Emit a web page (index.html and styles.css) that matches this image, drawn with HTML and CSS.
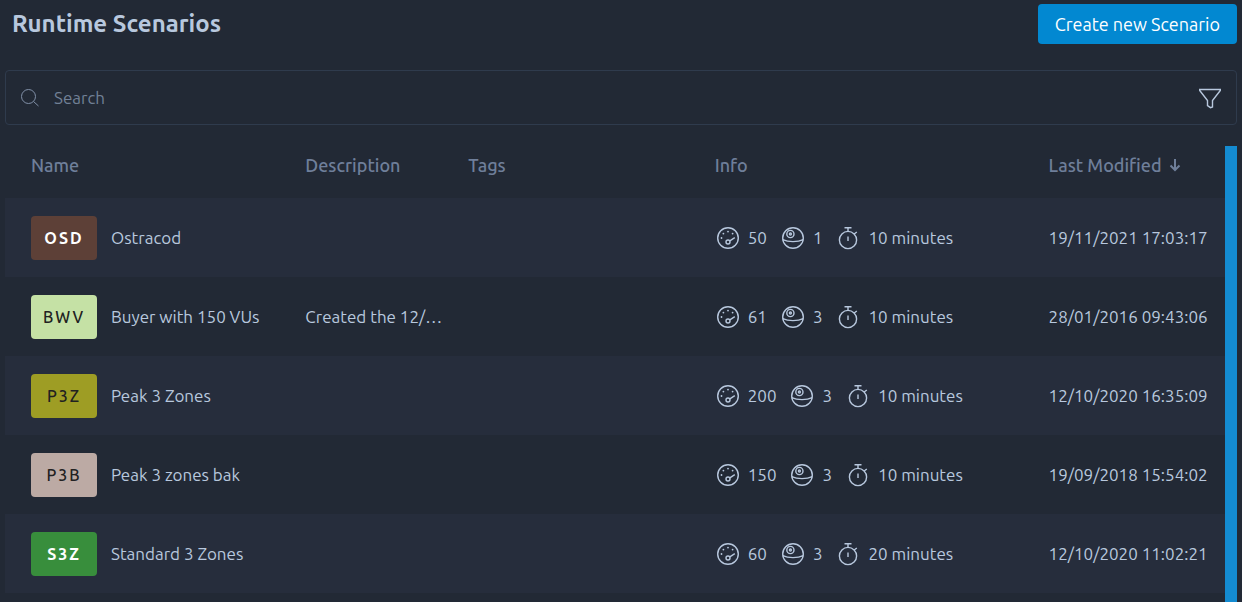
FILE: index.html
```html
<!DOCTYPE html>
<html lang="en">
<head>
    <meta charset="UTF-8">
    <meta name="viewport" content="width=device-width, initial-scale=1.0">
    <title>Runtime Scenarios</title>
    <link rel="stylesheet" href="styles.css">
</head>
<body>
    <!-- Icons shared by the rows -->
    <svg class="icon-defs" aria-hidden="true">
        <symbol id="icon-gauge" viewBox="0 0 24 24">
            <circle cx="12" cy="12" r="10.3"/>
            <circle cx="12" cy="16" r="2"/>
            <path d="M13.8 14.9l5-3.2"/>
            <path class="dots" d="M5.5 12h.01M7.4 7.6h.01M12 5.6h.01M16.6 7.6h.01"/>
        </symbol>
        <symbol id="icon-sphere" viewBox="0 0 24 24">
            <circle cx="12" cy="12" r="10.3"/>
            <circle cx="9.4" cy="8" r="3.6"/>
            <circle cx="9.4" cy="8" r="1"/>
            <path d="M1.8 13.6c2.6 1.3 6 2 10.2 2s7.6-.7 10.2-2"/>
        </symbol>
        <symbol id="icon-timer" viewBox="0 0 24 24">
            <circle cx="12" cy="14" r="8.6"/>
            <path d="M12 5.4V1.7M8.5 1.7h7M12 10.5V15M18.2 8l2.6-2"/>
        </symbol>
    </svg>

    <header class="page-header">
        <h1>Runtime Scenarios</h1>
        <button type="button" class="create-btn">Create new Scenario</button>
    </header>

    <div class="search-bar">
        <label for="search" aria-label="Search">
            <svg class="search-icon" viewBox="0 0 20 20"><circle cx="8.5" cy="8.5" r="7"/><path d="M13.5 13.5l5 4.5"/></svg>
        </label>
        <input type="text" id="search" placeholder="Search">
        <button type="button" class="filter-btn" aria-label="Filter">
            <svg viewBox="0 0 24 24"><path d="M1.7 3.5h20.6v1L14.5 14.5V21l-2 .7-3-2v-5.2L1.7 4.5z"/></svg>
        </button>
    </div>

    <main class="list">
        <table class="scenarios">
            <colgroup>
                <col class="col-name">
                <col class="col-description">
                <col class="col-tags">
                <col class="col-info">
                <col class="col-modified">
            </colgroup>
            <thead>
                <tr>
                    <th>Name</th>
                    <th>Description</th>
                    <th>Tags</th>
                    <th>Info</th>
                    <th>
                        <button type="button" class="sort-btn">Last Modified
                            <svg viewBox="0 0 14 14"><path d="M7 1v11M2.5 7.5L7 12l4.5-4.5"/></svg>
                        </button>
                    </th>
                </tr>
            </thead>
            <tbody>
                <tr>
                    <td><div class="name"><span class="badge brown">OSD</span>Ostracod</div></td>
                    <td></td>
                    <td></td>
                    <td>
                        <div class="info">
                            <span><svg><use href="#icon-gauge"/></svg>50</span>
                            <span><svg><use href="#icon-sphere"/></svg>1</span>
                            <span><svg><use href="#icon-timer"/></svg>10 minutes</span>
                        </div>
                    </td>
                    <td>19/11/2021 17:03:17</td>
                </tr>
                <tr>
                    <td><div class="name"><span class="badge lime">BWV</span>Buyer with 150 VUs</div></td>
                    <td>Created the 12/…</td>
                    <td></td>
                    <td>
                        <div class="info">
                            <span><svg><use href="#icon-gauge"/></svg>61</span>
                            <span><svg><use href="#icon-sphere"/></svg>3</span>
                            <span><svg><use href="#icon-timer"/></svg>10 minutes</span>
                        </div>
                    </td>
                    <td>28/01/2016 09:43:06</td>
                </tr>
                <tr>
                    <td><div class="name"><span class="badge olive">P3Z</span>Peak 3 Zones</div></td>
                    <td></td>
                    <td></td>
                    <td>
                        <div class="info">
                            <span><svg><use href="#icon-gauge"/></svg>200</span>
                            <span><svg><use href="#icon-sphere"/></svg>3</span>
                            <span><svg><use href="#icon-timer"/></svg>10 minutes</span>
                        </div>
                    </td>
                    <td>12/10/2020 16:35:09</td>
                </tr>
                <tr>
                    <td><div class="name"><span class="badge taupe">P3B</span>Peak 3 zones bak</div></td>
                    <td></td>
                    <td></td>
                    <td>
                        <div class="info">
                            <span><svg><use href="#icon-gauge"/></svg>150</span>
                            <span><svg><use href="#icon-sphere"/></svg>3</span>
                            <span><svg><use href="#icon-timer"/></svg>10 minutes</span>
                        </div>
                    </td>
                    <td>19/09/2018 15:54:02</td>
                </tr>
                <tr>
                    <td><div class="name"><span class="badge green">S3Z</span>Standard 3 Zones</div></td>
                    <td></td>
                    <td></td>
                    <td>
                        <div class="info">
                            <span><svg><use href="#icon-gauge"/></svg>60</span>
                            <span><svg><use href="#icon-sphere"/></svg>3</span>
                            <span><svg><use href="#icon-timer"/></svg>20 minutes</span>
                        </div>
                    </td>
                    <td>12/10/2020 11:02:21</td>
                </tr>
            </tbody>
        </table>
        <div class="scrollbar"></div>
    </main>
</body>
</html>
```

FILE: styles.css
```css
* {
    box-sizing: border-box;
}

body {
    margin: 0;
    padding: 4px 5px 0;
    height: 100vh;
    overflow: hidden;
    display: flex;
    flex-direction: column;
    background: #222935;
    color: #b8c8de;
    font-family: Ubuntu, "Noto Sans", sans-serif;
    font-size: 17px;
    line-height: 24px;
}

button, input {
    font: inherit;
    color: inherit;
    background: none;
    border: none;
    padding: 0;
}

button {
    cursor: pointer;
}

svg {
    fill: none;
    stroke: currentColor;
    stroke-width: 1.4;
    flex: none;
}

.icon-defs {
    display: none;
}

.page-header {
    display: flex;
    justify-content: space-between;
    align-items: center;
    padding-left: 7px;
    margin-bottom: 26px;
}

h1 {
    margin: 0;
    font-size: 24px;
    font-weight: 600;
    line-height: 32px;
}

.create-btn {
    height: 40px;
    padding: 0 17px;
    background: #0288d1;
    color: #fff;
    border-radius: 4px;
    font-size: 18px;
}

.create-btn:hover {
    background: #0277bd;
}

/* Search */
.search-bar {
    display: flex;
    align-items: center;
    height: 55px;
    padding: 0 14px;
    border: 1px solid #2f3b4d;
    border-radius: 4px;
    margin-bottom: 21px;
}

.search-bar label {
    display: flex;
    color: #8190a8;
}

.search-icon {
    width: 20px;
    height: 20px;
    stroke-width: 1;
}

.search-bar input {
    flex: 1;
    min-width: 0;
    padding-left: 14px;
    outline: none;
}

.search-bar input::placeholder {
    color: #718096;
    opacity: 1;
}

.filter-btn {
    display: flex;
}

.filter-btn svg {
    width: 24px;
    height: 24px;
}

/* Scenario list */
.list {
    flex: 1;
    min-height: 0;
    display: flex;
    align-items: flex-start;
}

.scrollbar {
    width: 12px;
    align-self: stretch;
    background: #148bd1;
}

.scenarios {
    flex: 1;
    table-layout: fixed;
    border-collapse: collapse;
}

.col-name {
    width: 22.5%;
}

.col-description {
    width: 13.2%;
}

.col-tags {
    width: 20.3%;
}

.col-info {
    width: 27.4%;
}

.col-modified {
    width: 16.6%;
}

th, td {
    padding: 0 0 0 26px;
    text-align: left;
    white-space: nowrap;
}

th {
    height: 52px;
    padding-bottom: 14px;
    color: #6f7f9a;
    font-size: 18px;
    font-weight: 500;
}

td {
    height: 79px;
}

tbody tr:nth-child(odd) {
    background: #262d3c;
}

.sort-btn {
    display: flex;
    align-items: center;
    gap: 6px;
}

.sort-btn svg {
    width: 14px;
    height: 14px;
    stroke-width: 2;
}

.name {
    display: flex;
    align-items: center;
    gap: 14px;
}

.badge {
    width: 66px;
    height: 44px;
    border-radius: 4px;
    line-height: 44px;
    text-align: center;
    font-size: 16px;
    font-weight: 500;
    letter-spacing: 2px;
    color: #212121;
}

.brown, .green {
    color: #fff;
    font-weight: 600;
}

.brown {
    background: #5d4037;
}

.lime {
    background: #c5e1a5;
}

.olive {
    background: #9e9d24;
}

.taupe {
    background: #bcaaa4;
}

.green {
    background: #388e3c;
}

.info {
    display: flex;
    gap: 14px;
    padding-left: 1px;
}

.info span {
    display: flex;
    align-items: center;
    gap: 8px;
}

.info svg {
    width: 24px;
    height: 24px;
}

.dots {
    stroke-width: 1.8;
    stroke-linecap: round;
}
```
